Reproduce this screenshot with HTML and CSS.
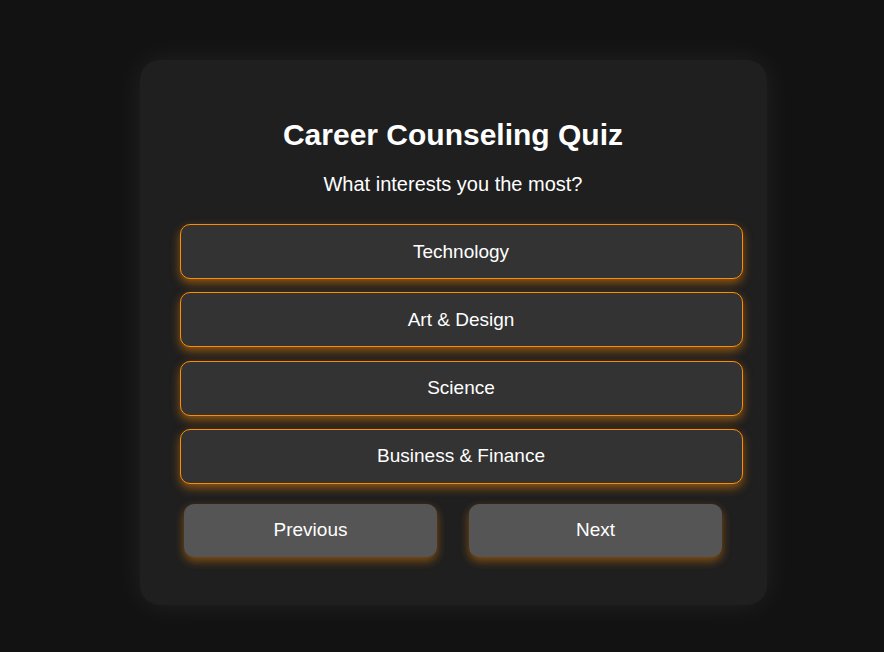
FILE: index.html
```html
<!DOCTYPE html>
<html lang="en">
<head>
<meta charset="utf-8">
<title>Career Counseling Quiz</title>
<link rel="stylesheet" href="styles.css">
</head>
<body>
  <main class="quiz-card">
    <h1 class="quiz-title">Career Counseling Quiz</h1>
    <p class="quiz-question">What interests you the most?</p>
    <div class="options">
      <button class="option">Technology</button>
      <button class="option">Art &amp; Design</button>
      <button class="option">Science</button>
      <button class="option">Business &amp; Finance</button>
    </div>
    <div class="nav">
      <button class="nav-btn">Previous</button>
      <button class="nav-btn">Next</button>
    </div>
  </main>
</body>
</html>
```

FILE: styles.css
```css
* { box-sizing: border-box; }

html, body {
  margin: 0;
  height: 100%;
}

body {
  background: #121212;
  color: #ffffff;
  font-family: "Liberation Sans", Arial, sans-serif;
  display: flex;
  justify-content: center;
  align-items: flex-start;
  padding-left: 22px;
  overflow: hidden;
}

.quiz-card {
  width: 627px;
  margin-top: 59.5px;
  padding: 40px 40px 48px;
  background: #1f1f1f;
  border-radius: 20px;
  box-shadow: 0 0 30px rgba(255, 255, 255, 0.07);
  text-align: center;
}

.quiz-title {
  margin: 17px 0 21px;
  font-size: 30px;
  font-weight: bold;
  line-height: 35px;
}

.quiz-question {
  margin: 0 0 28.5px;
  font-size: 20px;
  line-height: 23px;
}

.options {
  display: flex;
  flex-direction: column;
  gap: 13.33px;
  margin-right: -16px;
}

.option {
  display: block;
  width: 100%;
  padding: 15.5px 16px;
  font-family: inherit;
  font-size: 19px;
  line-height: 22px;
  color: #ffffff;
  background: #333333;
  border: 1px solid #ff8c00;
  border-radius: 10px;
  box-shadow: 0 4px 10px rgba(255, 140, 0, 0.5);
  cursor: pointer;
}

.nav {
  display: flex;
  justify-content: center;
  gap: 32px;
  margin-top: 20px;
}

.nav-btn {
  width: 253px;
  padding: 15.5px 16px;
  font-family: inherit;
  font-size: 19px;
  line-height: 22px;
  color: #ffffff;
  background: #555555;
  border: none;
  border-radius: 10px;
  box-shadow: 0 4px 10px rgba(255, 140, 0, 0.45);
  cursor: pointer;
}
```
